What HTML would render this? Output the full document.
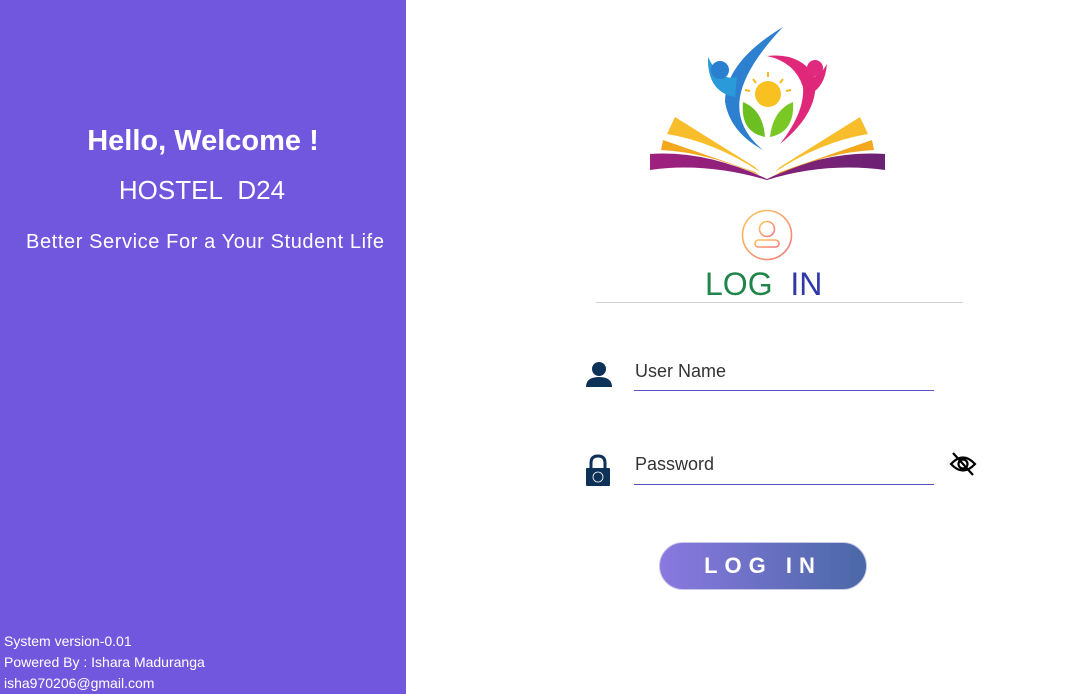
<!DOCTYPE html>
<html><head><meta charset="utf-8"><style>
body{margin:0;width:1091px;height:694px;position:relative;background:#fff;font-family:"Liberation Sans",sans-serif;overflow:hidden}
.l{position:absolute;left:0;top:0;width:406px;height:694px;background:#7157dd;color:#fff}
.a{position:absolute;white-space:nowrap}
</style></head><body>
<div class="l">
<div class="a" style="left:0;width:406px;text-align:center;top:125px;font-size:29px;font-weight:bold">Hello, Welcome !</div>
<div class="a" style="left:0;width:404px;text-align:center;top:175px;font-size:26px">HOSTEL&nbsp; D24</div>
<div class="a" style="left:26px;top:231px;font-size:20px;letter-spacing:0.6px">Better Service For a Your Student Life</div>
<div class="a" style="left:4px;top:631px;font-size:14px;line-height:21px">System version-0.01<br>Powered By : Ishara Maduranga<br>isha970206@gmail.com</div>
</div>
<svg class="a" style="left:645px;top:22px" width="245" height="162" viewBox="0 0 245 162">
<defs><linearGradient id="g1" x1="0" x2="1"><stop offset="0" stop-color="#a0207f"/><stop offset="1" stop-color="#6a2273"/></linearGradient></defs>
<path d="M5 132 Q60 128 122 157 Q180 128 240 132 L240 148 Q180 140 122 158 Q60 140 5 148Z" fill="url(#g1)"/>
<path d="M30 95 L110 145 L115 150 Q70 120 22 112Z" fill="#f8bd2a"/>
<path d="M18 118 L110 150 L114 153 Q60 130 16 128Z" fill="#f3a81e"/>
<path d="M215 95 L135 145 L130 150 Q175 120 223 112Z" fill="#f8bd2a"/>
<path d="M227 118 L135 150 L131 153 Q185 130 229 128Z" fill="#f3a81e"/>
<path d="M138 5 Q80 40 80 80 Q85 110 118 128 Q90 105 95 75 Q100 45 138 5Z" fill="#2d7fd0"/>
<path d="M63 35 Q62 70 90 75 L92 55 Q75 60 63 35Z" fill="#2a9ad8"/>
<circle cx="75" cy="48" r="9" fill="#2a7fd0"/>
<path d="M122 34 Q155 30 170 55 Q175 90 135 122 Q160 90 158 65 Q150 40 122 34Z" fill="#e0287a"/>
<path d="M182 42 Q180 65 165 72 L160 58 Q175 55 182 42Z" fill="#e0287a"/>
<circle cx="170" cy="46" r="8" fill="#e02a80"/>
<circle cx="123" cy="72" r="13" fill="#f8c020"/>
<g stroke="#f7b81a" stroke-width="2"><line x1="123" y1="50" x2="123" y2="55"/><line x1="108" y1="57" x2="111" y2="61"/><line x1="138" y1="57" x2="135" y2="61"/><line x1="100" y1="68" x2="105" y2="69"/><line x1="146" y1="68" x2="141" y2="69"/></g>
<path d="M120 115 Q95 110 98 80 Q118 88 120 115Z" fill="#6cbf20"/>
<path d="M125 115 Q150 110 148 80 Q128 88 125 115Z" fill="#7ac825"/>
</svg>
<svg class="a" style="left:741px;top:209px" width="52" height="52" viewBox="0 0 52 52"><defs><linearGradient id="g2" x1="0" y1="0" x2="1" y2="1"><stop offset="0" stop-color="#fdc75a"/><stop offset="1" stop-color="#f4767e"/></linearGradient></defs>
<g fill="none" stroke="url(#g2)" stroke-width="1.6"><circle cx="26" cy="26" r="24.5"/><circle cx="26" cy="20" r="7.5"/><rect x="14" y="31" width="24" height="7" rx="3.5"/></g></svg>
<div class="a" style="left:705px;top:266px;font-size:32px"><span style="color:#21844a">LOG</span>&nbsp; <span style="color:#3038a8">IN</span></div>
<div class="a" style="left:596px;top:302px;width:367px;height:1px;background:#d0d0d0"></div>
<svg class="a" style="left:585px;top:360px" width="28" height="28" viewBox="0 0 28 28"><circle cx="14" cy="9" r="7" fill="#0e3158"/><path d="M1 27 Q1 17 14 17 Q27 17 27 27Z" fill="#0e3158"/></svg>
<div class="a" style="left:635px;top:361px;font-size:18px;color:#333">User Name</div>
<div class="a" style="left:634px;top:390px;width:300px;height:1px;background:#5b4fc4"></div>
<svg class="a" style="left:586px;top:454px" width="24" height="32" viewBox="0 0 24 32"><path d="M5 14 V9 Q5 2 12 2 Q19 2 19 9 V14" fill="none" stroke="#0e3158" stroke-width="3"/><rect x="0" y="14" width="24" height="18" rx="1" fill="#0e3158"/><circle cx="12" cy="23" r="5" fill="none" stroke="#fff" stroke-width="0.8"/></svg>
<div class="a" style="left:635px;top:454px;font-size:18px;color:#333">Password</div>
<div class="a" style="left:634px;top:484px;width:300px;height:1px;background:#5b4fc4"></div>
<svg class="a" style="left:949px;top:451px" width="28" height="26" viewBox="0 0 28 26"><path d="M2 13 Q14 0 26 13 Q14 26 2 13Z" fill="none" stroke="#000" stroke-width="2.2"/><circle cx="14" cy="13" r="4.5" fill="none" stroke="#000" stroke-width="2.2"/><line x1="4" y1="2" x2="24" y2="24" stroke="#000" stroke-width="2.2"/></svg>
<div class="a" style="left:659px;top:542px;width:206px;height:46px;border-radius:24px;border:1px solid #c8c8e8;background:linear-gradient(90deg,#8a78e0,#4a68a6);color:#fff;font-weight:bold;font-size:22px;letter-spacing:7px;text-align:center;line-height:46px">LOG IN</div>
</body></html>
